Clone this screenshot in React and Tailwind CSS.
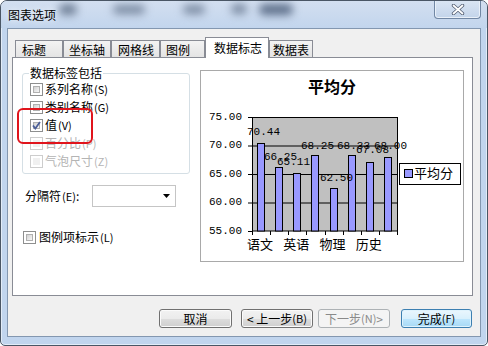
import React from "react";

const cjk = "font-['Noto_Sans_CJK_SC','Noto_Sans',sans-serif]";

const tabs = [
  { label: "标题", cls: "w-[48px] pl-[6px]" },
  { label: "坐标轴", cls: "w-[48px] pl-[5px]" },
  { label: "网格线", cls: "w-[49px] pl-[6px]" },
  { label: "图例", cls: "w-[45px] pl-[5px]" },
  { label: "数据标志", cls: "w-[64px] pl-[8px]", active: true },
  { label: "数据表", cls: "w-[44px] pl-[3px]" },
];

const options = [
  { label: "系列名称", hot: "S" },
  { label: "类别名称", hot: "G" },
  { label: "值", hot: "V", checked: true },
  { label: "百分比", hot: "P", disabled: true },
  { label: "气泡尺寸", hot: "Z", disabled: true },
];

const values = [70.44, 66.25, 65.11, 68.25, 62.5, 68.33, 67.08, 68.0];
// label anchors measured off the preview, in svg coords
const labelPos = [
  [46, 31], [63, 56], [76, 61], [100, 45], [119, 77], [136, 45], [155, 49], [173, 45],
];
const ticks = [
  { v: "75.00", y: 16 },
  { v: "70.00", y: 44.5 },
  { v: "65.00", y: 73 },
  { v: "60.00", y: 101.5 },
  { v: "55.00", y: 130 },
];
const cats = ["语文", "英语", "物理", "历史"];

const slot = 145 / 8;
const toY = (v) => 16 + (75 - v) * 5.7;

function Check({ checked, disabled }) {
  return (
    <span
      className={
        disabled
          ? "relative flex h-[13px] w-[13px] shrink-0 border border-[#cdcdcd] bg-white p-[2px]"
          : "relative flex h-[13px] w-[13px] shrink-0 border border-[#8e8f8f] bg-white p-[2px]"
      }
    >
      <span
        className={
          disabled
            ? "h-full w-full bg-[#f0f0f0]"
            : "h-full w-full border border-[#b0b0b0] bg-gradient-to-br from-[#d2d2d2] to-[#f7f7f7]"
        }
      />
      {checked && (
        <svg width="13" height="13" className="absolute left-[-1px] top-[-1px]">
          <path d="M3 6.5 L5.3 9.5 L10 3" fill="none" stroke="#4b5e98" strokeWidth="1.8" />
        </svg>
      )}
    </span>
  );
}

function Btn({ children, kind = "normal", cls }) {
  const base = "flex h-[19px] items-center justify-center rounded-[3px] border text-[12px] leading-none ";
  const look =
    kind === "default"
      ? "border-[#3c7fb1] bg-[linear-gradient(#eaf6fd_0%,#d9f0fc_50%,#bee6fd_52%,#a7d9f5_100%)] text-black shadow-[inset_0_0_0_1px_#dff3fd]"
      : kind === "disabled"
      ? "border-[#adb2b5] bg-[#f4f4f4] text-[#8a8a8a]"
      : "border-[#707070] bg-[linear-gradient(#f2f2f2_0%,#ebebeb_50%,#dddddd_52%,#cfcfcf_100%)] text-black shadow-[inset_0_0_0_1px_#fbfbfb]";
  return <div className={base + look + " " + cls}>{children}</div>;
}

function Chart() {
  return (
    <svg width="262" height="160" className="block">
      <rect x="51.5" y="16.5" width="145" height="113.5" fill="#c0c0c0" stroke="#000" />
      {[44.5, 73, 101.5].map((y) => (
        <line key={y} x1="51" x2="197" y1={y + 0.5} y2={y + 0.5} stroke="#000" />
      ))}
      {ticks.map((t) => (
        <g key={t.v}>
          <line x1="47" x2="52" y1={t.y + 0.5} y2={t.y + 0.5} stroke="#000" />
          <text
            x="41"
            y={t.y}
            textAnchor="end"
            dominantBaseline="middle"
            fontFamily="Liberation Mono, monospace"
            fontSize="11"
          >
            {t.v}
          </text>
        </g>
      ))}
      {values.map((v, i) => {
        const x = Math.round(51 + i * slot + 5) + 0.5;
        const y = Math.round(toY(v)) + 0.5;
        return (
          <rect key={i} x={x} y={y} width="7" height={130 - y} fill="#9999ff" stroke="#000" />
        );
      })}
      {Array.from({ length: 9 }).map((_, i) => {
        const x = Math.round(51 + i * slot) + 0.5;
        return <line key={i} x1={x} x2={x} y1="130" y2="134" stroke="#000" />;
      })}
      {values.map((v, i) => (
        <text
          key={i}
          x={labelPos[i][0]}
          y={labelPos[i][1]}
          dominantBaseline="middle"
          fontFamily="Liberation Mono, monospace"
          fontSize="11"
        >
          {v.toFixed(2)}
        </text>
      ))}
      {cats.map((c, i) => (
        <text
          key={c}
          x={51 + i * 2 * slot + 8}
          y="144"
          textAnchor="middle"
          dominantBaseline="middle"
          fontFamily="Noto Sans CJK SC, sans-serif"
          fontSize="13"
        >
          {c}
        </text>
      ))}
      <rect x="198.5" y="62.5" width="61" height="21" fill="#fff" stroke="#000" />
      <rect x="203.5" y="68.5" width="8" height="8" fill="#9999ff" stroke="#000" />
      <text
        x="213"
        y="73"
        dominantBaseline="middle"
        fontFamily="Noto Sans CJK SC, sans-serif"
        fontSize="13"
      >
        平均分
      </text>
    </svg>
  );
}

export default function App() {
  return (
    <div className={"h-[346px] w-[488px] bg-white text-black " + cjk}>
      <div className="flex h-full flex-col overflow-hidden rounded-t-[7px] rounded-b-[5px] border border-[#4a5665] bg-[#c1d5ee] shadow-[inset_0_0_0_1px_#e2ecf8]">
        {/* title bar */}
        <div className="relative flex h-[27px] items-start bg-gradient-to-b from-[#d3dff0] to-[#c2d5ed]">
          <div className="absolute left-[58px] top-[3px] h-[11px] w-[18px] rounded-full bg-[#6f7f96] blur-[4px]" />
          <div className="absolute left-[112px] top-[4px] h-[9px] w-[32px] rounded-full bg-[#7a8aa1] blur-[4px]" />
          <div className="absolute left-[182px] top-[4px] h-[9px] w-[22px] rounded-full bg-[#7a8aa1] blur-[4px]" />
          <div className="absolute left-[230px] top-[3px] h-[10px] w-[16px] rounded-full bg-[#7a8aa1] blur-[4px]" />
          <div className="absolute left-[258px] top-[3px] h-[11px] w-[34px] rounded-full bg-[#5d6f8a] blur-[4px]" />
          <span className="relative ml-[7px] self-center pt-[1px] text-[12px] leading-none [text-shadow:0_0_6px_#fff]">
            图表选项
          </span>
          <div className="relative ml-auto mr-[6px] flex h-[19px] w-[47px] -mt-px items-center justify-center rounded-b-[4px] border border-t-0 border-[#7187a4] bg-gradient-to-b from-[#dbe6f4] to-[#c3d4ea] shadow-[inset_0_0_0_1px_#e9f0f9]">
            <svg width="14" height="11">
              <path
                d="M2.5 1.5 L7 5.5 L11.5 1.5 M2.5 9.5 L7 5.5 L11.5 9.5"
                fill="none"
                stroke="#556075"
                strokeWidth="3.4"
                strokeLinecap="round"
              />
              <path
                d="M2.5 1.5 L7 5.5 L11.5 1.5 M2.5 9.5 L7 5.5 L11.5 9.5"
                fill="none"
                stroke="#fff"
                strokeWidth="1.8"
                strokeLinecap="round"
              />
            </svg>
          </div>
        </div>

        {/* client area */}
        <div className="mx-[6px] flex h-[309px] flex-col border border-[#8397b0] bg-[#f0f0f0] pl-[4px] pt-[9px]">
          <div className="flex h-[19px] items-end pl-[3px]">
            {tabs.map((t) =>
              t.active ? (
                <div
                  key={t.label}
                  className={
                    "relative z-10 -mb-px flex h-[21px] items-center border border-b-0 border-[#898c95] bg-white text-[12px] " +
                    t.cls
                  }
                >
                  {t.label}
                </div>
              ) : (
                <div
                  key={t.label}
                  className={
                    "flex h-[17px] items-center border border-b-0 border-[#898c95] bg-gradient-to-b from-[#f3f3f3] to-[#e4e4e4] pt-[1px] text-[12px] " +
                    t.cls
                  }
                >
                  {t.label}
                </div>
              )
            )}
          </div>

          <div className="flex h-[239px] w-[461px] items-start border border-[#898c95] bg-white pl-[9px]">
            {/* left column */}
            <div className="w-[168px] pt-[15px]">
              <div className="relative h-[101px] rounded-[3px] border border-[#d5dfe5] pl-[7px] pt-[6px]">
                <span className="absolute left-[6px] top-[-8px] bg-white px-px text-[12px] leading-[14px]">
                  数据标签包括
                </span>
                {options.map((o) => (
                  <div key={o.hot} className="flex h-[18px] items-center gap-[2px]">
                    <Check checked={o.checked} disabled={o.disabled} />
                    <span
                      className={
                        o.disabled
                          ? "text-[12px] leading-none text-[#b4b4b4]"
                          : "text-[12px] leading-none text-black"
                      }
                    >
                      {o.label}
                      <span className="ml-px text-[11px]">({o.hot})</span>
                    </span>
                  </div>
                ))}
                <div className="absolute left-[-6px] top-[34px] h-[36px] w-[76px] rounded-[6px] border-2 border-[#e0141c]" />
              </div>

              <div className="mt-[11px] flex h-[22px] items-center">
                <span className="w-[70px] pl-[3px] text-[12px] leading-none">
                  分隔符<span className="ml-px text-[11px]">(E)</span>:
                </span>
                <div className="flex h-[22px] w-[84px] items-center justify-end border border-[#c5c5c5] bg-white pr-[4px]">
                  <svg width="8" height="5">
                    <path d="M0 0 H7 L3.5 4 Z" fill="#000" />
                  </svg>
                </div>
              </div>

              <div className="mt-[23px] flex h-[14px] items-center gap-[3px] pl-px">
                <Check />
                <span className="text-[12px] leading-none">
                  图例项标示<span className="ml-px text-[11px]">(L)</span>
                </span>
              </div>
            </div>

            {/* chart preview */}
            <div className="ml-[10px] mt-[12px] h-[192px] w-[264px] border border-[#a9a9a9] bg-white">
              <div className="flex h-[30px] items-center justify-center text-[16px] font-bold leading-none">
                平均分
              </div>
              <Chart />
            </div>
          </div>

          <div className="mt-[13px] flex pl-[147px]">
            <Btn cls="w-[73px]">取消</Btn>
            <Btn cls="ml-[9px] w-[72px]">&lt; 上一步<span className="text-[11px]">(B)</span></Btn>
            <Btn kind="disabled" cls="ml-[5px] w-[72px]">
              下一步<span className="text-[11px]">(N)</span> &gt;
            </Btn>
            <Btn kind="default" cls="ml-[11px] w-[71px]">
              完成<span className="text-[11px]">(F)</span>
            </Btn>
          </div>
        </div>
      </div>
    </div>
  );
}
